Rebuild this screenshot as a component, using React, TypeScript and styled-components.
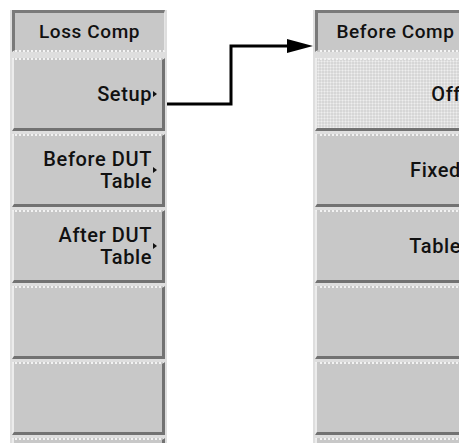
import React from 'react';
import styled, { createGlobalStyle, css } from 'styled-components';

const GlobalStyle = createGlobalStyle`
  html, body {
    margin: 0;
    padding: 0;
    background: #fff;
    overflow: hidden;
  }
  body {
    font-family: Roboto, "DejaVu Sans", sans-serif;
  }
`;

const Page = styled.div`
  width: 459px;
  height: 443px;
  overflow: hidden;
  display: flex;
  align-items: flex-start;
  padding: 10px 0 0 10px;
  box-sizing: border-box;
`;

const Column = styled.div<{ width: number }>`
  width: ${p => p.width}px;
  flex-shrink: 0;
  background: #dedede;
  padding: 0 2px;
  box-sizing: border-box;
  display: flex;
  flex-direction: column;
  gap: 3px;
`;

const Title = styled.div`
  height: 42px;
  margin-bottom: 3px;
  box-sizing: border-box;
  background: #c8c8c8;
  border-top: 3px solid #7a7a7a;
  border-left: 3px solid #7a7a7a;
  border-right: 1px solid #e6e6e6;
  border-bottom: 2px dotted #f4f4f4;
  display: flex;
  align-items: center;
  justify-content: center;
  font-size: 19px;
  font-weight: 500;
  letter-spacing: 0.6px;
  color: #111;
  white-space: nowrap;
`;

const Key = styled.div<{ selected?: boolean }>`
  height: 73px;
  box-sizing: border-box;
  background: #c8c8c8;
  border-top: 2px dotted #f2f2f2;
  border-left: 2px solid #ececec;
  border-right: 3px solid #727272;
  border-bottom: 3px solid #727272;
  display: flex;
  align-items: center;
  justify-content: flex-end;
  padding-right: 5px;
  font-size: 20px;
  font-weight: 500;
  letter-spacing: 0.6px;
  line-height: 22px;
  color: #111;
  white-space: nowrap;
  ${p =>
    p.selected &&
    css`
      background-color: #d6d6d6;
      background-image: radial-gradient(circle, #eeeeee 0.9px, transparent 1.1px);
      background-size: 3px 3px;
    `}
`;

const Label = styled.div`
  display: flex;
  flex-direction: column;
  align-items: flex-end;
  text-align: right;
`;

const MarkerSlot = styled.span`
  width: 5px;
  flex-shrink: 0;
  display: flex;
  justify-content: flex-end;
`;

const Marker = styled.span`
  width: 0;
  height: 0;
  border-top: 3px solid transparent;
  border-bottom: 3px solid transparent;
  border-left: 4px solid #111;
`;

const Connector = styled.svg`
  width: 146px;
  height: 120px;
  flex-shrink: 0;
  margin-top: -10px;
`;

interface SoftKey {
  lines: string[];
  more?: boolean;
  selected?: boolean;
}

const lossKeys: SoftKey[] = [
  { lines: ['Setup'], more: true },
  { lines: ['Before DUT', 'Table'], more: true },
  { lines: ['After DUT', 'Table'], more: true },
  { lines: [] },
  { lines: [] },
  { lines: [] },
];

const compKeys: SoftKey[] = [
  { lines: ['Off'], selected: true },
  { lines: ['Fixed'] },
  { lines: ['Table'] },
  { lines: [] },
  { lines: [] },
  { lines: [] },
];

const Menu: React.FC<{ title: string; keys: SoftKey[]; width: number }> = ({ title, keys, width }) => (
  <Column width={width}>
    <Title>{title}</Title>
    {keys.map((k, i) => (
      <Key key={i} selected={k.selected}>
        <Label>
          {k.lines.map(l => (
            <span key={l}>{l}</span>
          ))}
        </Label>
        <MarkerSlot>{k.more && <Marker />}</MarkerSlot>
      </Key>
    ))}
  </Column>
);

const App: React.FC = () => (
  <>
    <GlobalStyle />
    <Page>
      <Menu title="Loss Comp" keys={lossKeys} width={157} />
      <Connector viewBox="0 -10 146 120">
        <polyline
          points="-3,94 64,94 64,36 122,36"
          fill="none"
          stroke="#000"
          strokeWidth="3"
        />
        <polygon points="120,29 146,36 120,43" fill="#000" />
      </Connector>
      <Menu title="Before Comp" keys={compKeys} width={163} />
    </Page>
  </>
);

export default App;
